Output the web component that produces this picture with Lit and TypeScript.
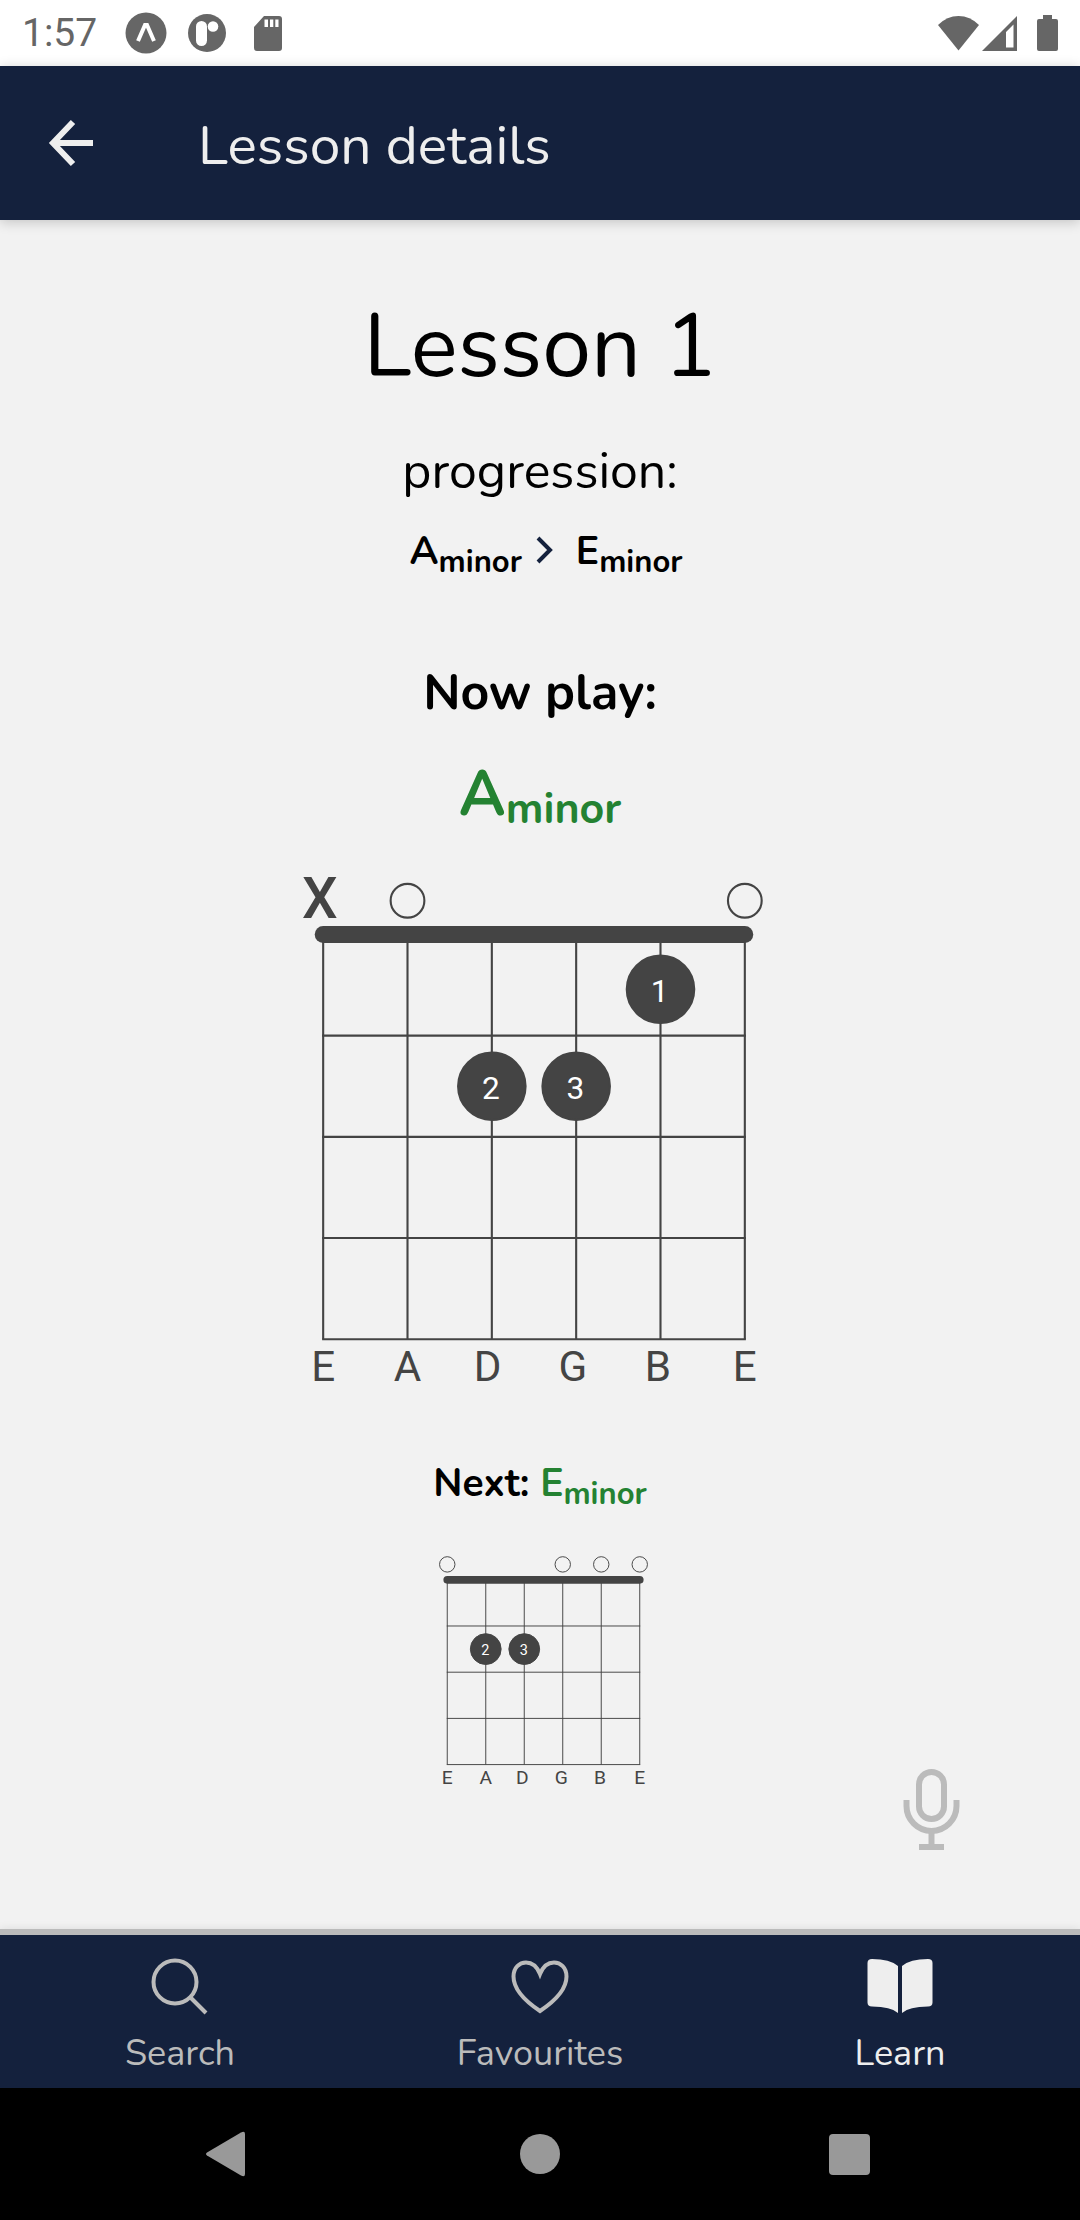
import { LitElement, html, svg, css, nothing } from "lit";
import { customElement, property } from "lit/decorators.js";

interface Finger {
  string: number;
  fret: number;
  finger: number;
}

interface Chord {
  root: string;
  suffix: string;
  open: number[];
  muted: number[];
  fingers: Finger[];
}

const A_MINOR: Chord = {
  root: "A",
  suffix: "minor",
  open: [1, 5],
  muted: [0],
  fingers: [
    { string: 4, fret: 1, finger: 1 },
    { string: 2, fret: 2, finger: 2 },
    { string: 3, fret: 2, finger: 3 },
  ],
};

const E_MINOR: Chord = {
  root: "E",
  suffix: "minor",
  open: [0, 3, 4, 5],
  muted: [],
  fingers: [
    { string: 1, fret: 2, finger: 2 },
    { string: 2, fret: 2, finger: 3 },
  ],
};

const STRINGS = [
  { name: "E", labelX: 0 },
  { name: "A", labelX: 10 },
  { name: "D", labelX: 19.5 },
  { name: "G", labelX: 29.6 },
  { name: "B", labelX: 39.7 },
  { name: "E", labelX: 50 },
];

const FRET_LINES = [12, 24, 36, 48];
const FINGER_Y = [0, 6.5, 18, 30, 42];

/* Guitar neck: strings 10 units apart, frets 12 units apart, nut at y = 0. */
@customElement("chord-diagram")
export class ChordDiagram extends LitElement {
  @property({ attribute: false }) chord: Chord = A_MINOR;

  static styles = css`
    :host {
      display: block;
    }
    .neck {
      display: block;
      width: 100%;
      height: auto;
      font-family: Roboto, sans-serif;
    }
    .line {
      fill: none;
      stroke: #444;
      stroke-width: 0.25;
    }
    .nut {
      stroke: #444;
      stroke-width: 2;
      stroke-linecap: round;
    }
    .dot {
      fill: #444;
      stroke: #444;
      stroke-width: 0.25;
    }
    .finger {
      fill: #fff;
      font-size: 3.75px;
      text-anchor: middle;
    }
    .mute {
      fill: #444;
      font-size: 6.7px;
      font-weight: 500;
      text-anchor: middle;
    }
    .tuning {
      fill: #444;
      font-size: 5px;
      text-anchor: middle;
    }
  `;

  render() {
    const c = this.chord;
    return html`
      <svg class="neck" viewBox="-5 -8 60 64" role="img" aria-label="${c.root} ${c.suffix} chord">
        ${STRINGS.map((_, i) => svg`<path class="line" d="M${i * 10} 0V48" />`)}
        ${FRET_LINES.map((y) => svg`<path class="line" d="M-0.125 ${y}H50.125" />`)}
        <path class="nut" d="M0 0H50" />
        ${c.open.map((s) => svg`<circle class="line" cx=${s * 10} cy="-4" r="2" />`)}
        ${c.muted.map((s) => svg`<text class="mute" x=${s * 10 - 0.4} y="-2">X</text>`)}
        ${c.fingers.map(
          (f) => svg`
            <circle class="dot" cx=${f.string * 10} cy=${FINGER_Y[f.fret]} r="4" />
            <text class="finger" x=${f.string * 10 - 0.1} y=${FINGER_Y[f.fret] + 1.5}>${f.finger}</text>`
        )}
        ${STRINGS.map((s) => svg`<text class="tuning" x=${s.labelX} y="53">${s.name}</text>`)}
      </svg>
    `;
  }
}

@customElement("status-bar")
export class StatusBar extends LitElement {
  static styles = css`
    :host {
      display: flex;
      justify-content: space-between;
      align-items: center;
      height: 66px;
      padding: 0 22px;
      background: #fff;
      color: #666;
      fill: #666;
      font: 39px/66px Roboto, sans-serif;
    }
    .group {
      display: flex;
      align-items: center;
    }
    .time {
      margin-right: 28px;
    }
    svg {
      display: block;
    }
    .app {
      margin-right: 21px;
    }
    .app + .app {
      margin-right: 28px;
    }
    .wifi {
      margin-right: 3px;
    }
    .signal {
      margin-right: 20px;
    }
  `;

  render() {
    return html`
      <div class="group">
        <span class="time">1:57</span>
        <svg class="app" width="42" height="42" viewBox="0 0 42 42" aria-hidden="true">
          <circle cx="21" cy="21" r="20.5" />
          <path d="M13 29L20 13H22L29 29" fill="none" stroke="#fff" stroke-width="4" />
        </svg>
        <svg class="app" width="38" height="38" viewBox="0 0 38 38" aria-hidden="true">
          <circle cx="19" cy="19" r="19" />
          <rect x="8" y="7" width="11" height="25" rx="5.5" fill="#fff" />
          <circle cx="25" cy="12.5" r="5.3" fill="#fff" />
        </svg>
        <svg width="28" height="35" viewBox="0 0 28 35" aria-hidden="true">
          <path
            fill-rule="evenodd"
            d="M10 0H25Q28 0 28 3V32Q28 35 25 35H3Q0 35 0 32V11ZM10.500 3.500V11H14V3.500ZM16 3.500V11H19.300V3.500ZM21.300 3.500V11H24.500V3.500Z"
          />
        </svg>
      </div>
      <div class="group">
        <svg class="wifi" width="41" height="35" viewBox="0 0 41 35" aria-hidden="true">
          <path d="M0 9Q9 0 20.500 0T41 9L20.500 34.500Z" />
        </svg>
        <svg class="signal" width="35" height="35" viewBox="0 0 35 35" aria-hidden="true">
          <path fill-rule="evenodd" d="M0 35L35 0V35ZM24 16V31.500H31.500V8.500Z" />
        </svg>
        <svg width="21" height="36" viewBox="0 0 21 36" aria-hidden="true">
          <path d="M6 0H15V4H19Q21 4 21 6V34Q21 36 19 36H2Q0 36 0 34V6Q0 4 2 4H6Z" />
        </svg>
      </div>
    `;
  }
}

const TABS = [
  {
    label: "Search",
    href: "#search",
    current: false,
    icon: svg`
      <circle cx="28" cy="28" r="21.5" class="outline" />
      <path class="outline" d="M43 43L59 59" />`,
  },
  {
    label: "Favourites",
    href: "#favourites",
    current: false,
    icon: svg`
      <path class="outline" d="M33 57C24 51 6.500 38 6.500 22.500C6.500 13.500 12.500 8.500 19 8.500C25.500 8.500 30 12.500 33 20C36 12.500 40.500 8.500 47 8.500C53.500 8.500 59.500 13.500 59.500 22.500C59.500 38 42 51 33 57Z" />`,
  },
  {
    label: "Learn",
    href: "#learn",
    current: true,
    icon: svg`
      <path class="solid" d="M31 12Q23 5 5 5Q0.500 5 0.500 9V48.500Q0.500 52.500 5 52.500Q24 52.500 31 59Z" />
      <path class="solid" d="M35 12Q43 5 61 5Q65.500 5 65.500 9V48.500Q65.500 52.500 61 52.500Q42 52.500 35 59Z" />`,
  },
];

@customElement("app-root")
export class AppRoot extends LitElement {
  static styles = css`
    :host {
      display: flex;
      flex-direction: column;
      min-height: 100vh;
      background: #f2f2f2;
      color: #000;
      font-family: Nunito, Lato, sans-serif;
    }
    .header {
      display: flex;
      align-items: center;
      gap: 80px;
      height: 154px;
      padding: 0 24px;
      background: #14213d;
      color: #eee;
      box-shadow: 0 2px 12px rgba(0, 0, 0, 0.2);
      z-index: 1;
    }
    .back {
      width: 94px;
      height: 94px;
      padding: 0;
      border: 0;
      background: none;
      color: inherit;
    }
    .back svg,
    .mic svg {
      display: block;
      margin: 0 auto;
    }
    .heading {
      margin: 0;
      font-size: 55px;
      line-height: 68px;
      font-weight: 400;
      padding-top: 6px;
    }
    .main {
      position: relative;
      flex: 1;
      display: flex;
      flex-direction: column;
      align-items: center;
      padding: 74px 24px 120px;
    }
    .title {
      margin: 0 0 42px;
      font-size: 88px;
      line-height: 106px;
      font-weight: 400;
    }
    .subtitle {
      margin: 0 0 26px;
      font-size: 50px;
      line-height: 60px;
      font-weight: 400;
    }
    .progression {
      display: flex;
      align-items: center;
      margin: 0 0 87px;
      padding: 0 0 0 12px;
      list-style: none;
    }
    .progression li {
      display: flex;
      align-items: center;
    }
    .chevron {
      margin: 0 22px 4px 14px;
    }
    .chord {
      font-size: 39px;
      line-height: 48px;
      font-weight: 700;
    }
    .chord sub {
      font-size: 31px;
      line-height: 0;
      vertical-align: -8px;
    }
    .green {
      color: #248232;
    }
    .now {
      margin: 0 0 33px;
      font-size: 50px;
      line-height: 60px;
      font-weight: 700;
    }
    .current {
      margin: 0 0 35px;
      font-size: 63px;
      line-height: 76px;
    }
    .current sub {
      font-size: 43px;
    }
    .diagram-now {
      width: 100%;
      max-width: 506px;
      padding-right: 12px;
      margin-bottom: 53px;
    }
    .next {
      margin: 0 0 41px;
    }
    .diagram-next {
      width: 100%;
      max-width: 231px;
      padding-left: 6px;
    }
    .mic {
      position: absolute;
      right: 114px;
      bottom: 73px;
      padding: 6px;
      border: 0;
      background: none;
      color: #bbb;
    }
    .tabs {
      display: grid;
      grid-template-columns: repeat(3, 1fr);
      height: 153px;
      border-top: 6px solid #bbb;
      background: #14213d;
      box-shadow: 0 -1px 8px rgba(0, 0, 0, 0.08);
    }
    .tab {
      display: flex;
      flex-direction: column;
      align-items: center;
      gap: 12px;
      padding-top: 19px;
      color: #bbb;
      font-size: 36px;
      line-height: 44px;
      text-decoration: none;
    }
    .tab[aria-current] {
      color: #eee;
    }
    .tab svg {
      display: block;
    }
    .outline {
      fill: none;
      stroke: currentColor;
      stroke-width: 4;
    }
    .solid {
      fill: currentColor;
    }
    .system {
      display: flex;
      justify-content: space-between;
      align-items: center;
      height: 132px;
      padding: 0 193px;
      background: #000;
      color: #999;
    }
    .key {
      padding: 0;
      border: 0;
      background: none;
      color: inherit;
    }
    .key svg {
      display: block;
      fill: currentColor;
    }
  `;

  private chordName(c: Chord) {
    return html`${c.root}<sub>${c.suffix}</sub>`;
  }

  render() {
    const progression = [A_MINOR, E_MINOR];
    return html`
      <status-bar></status-bar>
      <header class="header">
        <button class="back" type="button" aria-label="Back">
          <svg width="46" height="48" viewBox="0 0 46 48" fill="none" stroke="#eee" stroke-width="6" aria-hidden="true">
            <path d="M45 24H5M25 3L5 24L25 45" />
          </svg>
        </button>
        <h1 class="heading">Lesson details</h1>
      </header>

      <main class="main">
        <h2 class="title">Lesson 1</h2>
        <h3 class="subtitle">progression:</h3>
        <ol class="progression">
          ${progression.map(
            (c, i) => html`<li>
              ${i > 0
                ? html`<svg class="chevron" width="18" height="28" viewBox="0 0 18 28" fill="none" stroke="#14213d" stroke-width="4" aria-hidden="true">
                    <path d="M2 2L14 14L2 26" />
                  </svg>`
                : nothing}
              <span class="chord">${this.chordName(c)}</span>
            </li>`
          )}
        </ol>
        <h3 class="now">Now play:</h3>
        <p class="chord current green">${this.chordName(A_MINOR)}</p>
        <chord-diagram class="diagram-now" .chord=${A_MINOR}></chord-diagram>
        <p class="chord next">Next: <span class="green">${this.chordName(E_MINOR)}</span></p>
        <chord-diagram class="diagram-next" .chord=${E_MINOR}></chord-diagram>

        <button class="mic" type="button" aria-label="Listen">
          <svg width="57" height="81" viewBox="0 0 57 81" fill="none" stroke="currentColor" stroke-width="6" aria-hidden="true">
            <rect x="16" y="3" width="25" height="47" rx="12.5" />
            <path d="M3.500 31V37A25 25 0 0 0 53.500 37V31M28.500 62V78M16 78H41" />
          </svg>
        </button>
      </main>

      <nav class="tabs" aria-label="Sections">
        ${TABS.map(
          (t) => html`<a class="tab" href=${t.href} aria-current=${t.current ? "page" : nothing}>
            <svg width="66" height="66" viewBox="0 0 66 66" aria-hidden="true">${t.icon}</svg>
            <span>${t.label}</span>
          </a>`
        )}
      </nav>

      <div class="system">
        <button class="key" type="button" aria-label="System back">
          <svg width="66" height="66" viewBox="0 0 66 66" aria-hidden="true">
            <path d="M14 31.500L48 11.500Q52 9.500 52 13V53Q52 56.500 48 54.500L14 34.500Q12 33 14 31.500Z" />
          </svg>
        </button>
        <button class="key" type="button" aria-label="Home">
          <svg width="66" height="66" viewBox="0 0 66 66" aria-hidden="true"><circle cx="33" cy="33" r="20" /></svg>
        </button>
        <button class="key" type="button" aria-label="Overview">
          <svg width="66" height="66" viewBox="0 0 66 66" aria-hidden="true">
            <rect x="8" y="13" width="41" height="41" rx="4" />
          </svg>
        </button>
      </div>
    `;
  }
}
